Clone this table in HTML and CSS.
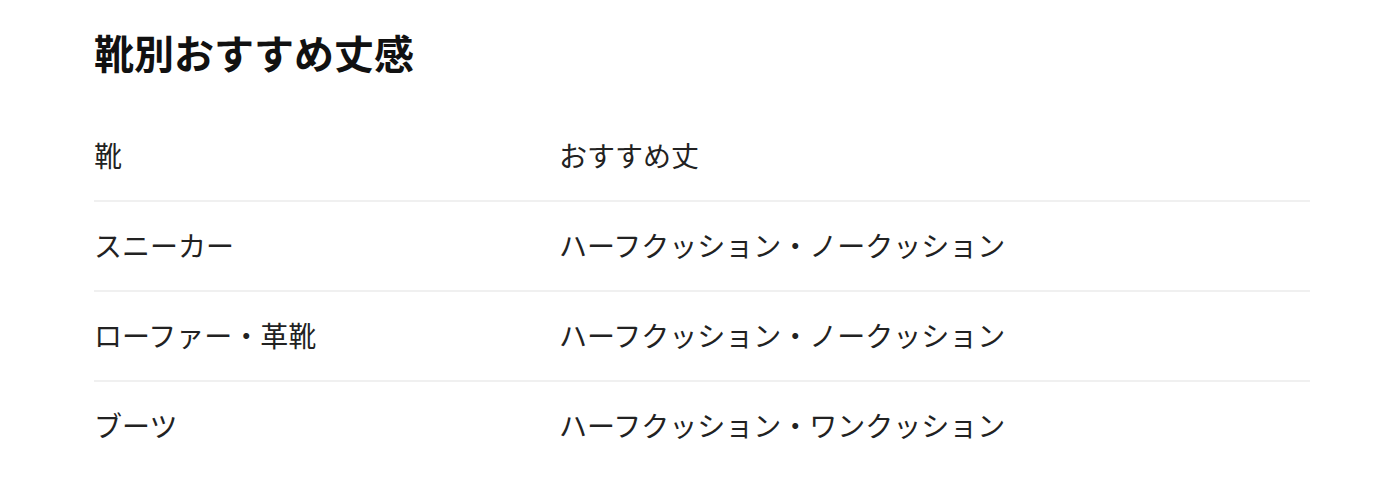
FILE: index.html
```html
<!DOCTYPE html>
<html lang="ja">
<head>
<meta charset="utf-8">
<title>靴別おすすめ丈感</title>
<link rel="stylesheet" href="styles.css">
</head>
<body>
<section class="page">
  <h1 class="title">靴別おすすめ丈感</h1>
  <div class="table">
    <div class="row head">
      <div class="cell">靴</div>
      <div class="cell">おすすめ丈</div>
    </div>
    <div class="row">
      <div class="cell">スニーカー</div>
      <div class="cell">ハーフクッション・ノークッション</div>
    </div>
    <div class="row">
      <div class="cell">ローファー・革靴</div>
      <div class="cell">ハーフクッション・ノークッション</div>
    </div>
    <div class="row last">
      <div class="cell">ブーツ</div>
      <div class="cell">ハーフクッション・ワンクッション</div>
    </div>
  </div>
</section>
</body>
</html>
```
FILE: styles.css
```css
html, body {
  margin: 0;
  padding: 0;
  background: #ffffff;
}
body {
  font-family: "Noto Sans CJK JP", "Noto Sans", sans-serif;
  color: #222222;
}
.page {
  padding: 22px 70px 0 94px;
}
.title {
  margin: 0 0 30px;
  font-size: 40px;
  line-height: 60px;
  font-weight: 700;
  color: #111111;
}
.table {
  display: flex;
  flex-direction: column;
}
.row {
  display: grid;
  grid-template-columns: 465px 1fr;
  padding: 22px 0 24px;
  border-bottom: 2px solid #f0f0f0;
  font-size: 28px;
  line-height: 42px;
}
.row.last {
  border-bottom: none;
}
.cell {
  white-space: nowrap;
}
```
